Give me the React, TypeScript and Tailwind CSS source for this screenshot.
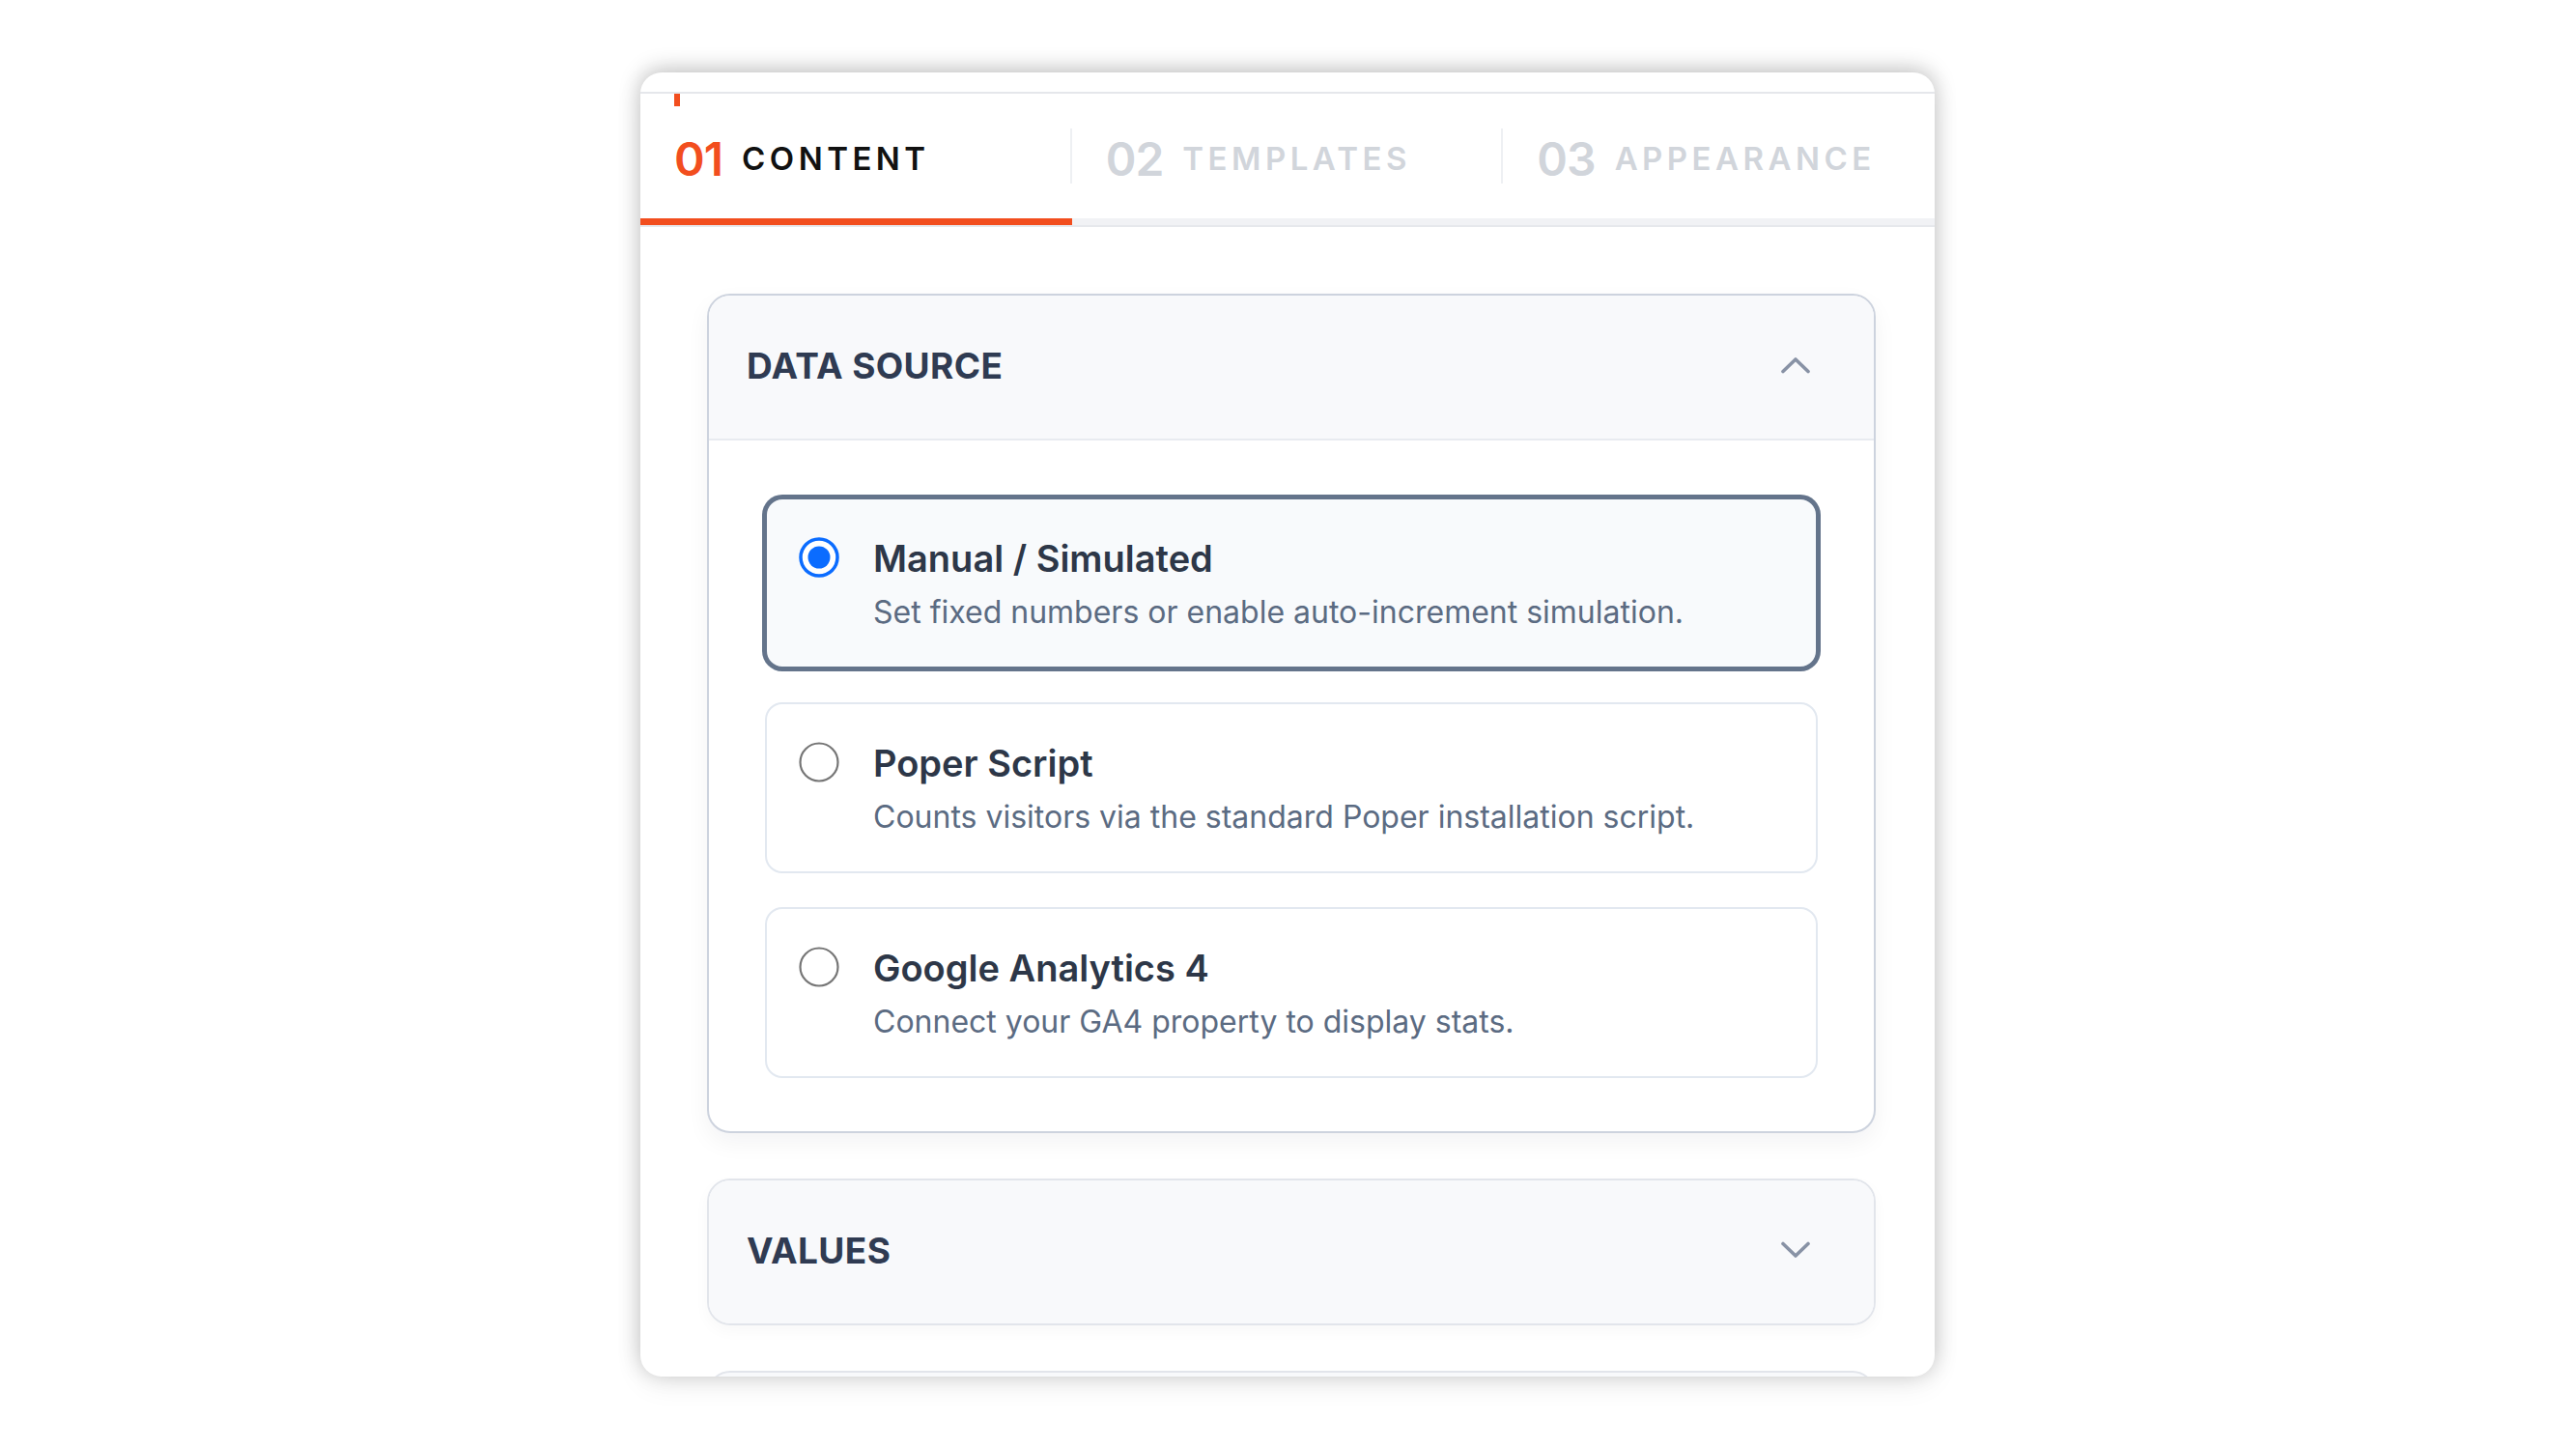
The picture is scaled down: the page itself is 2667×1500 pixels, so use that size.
import React from "react";

const font = { fontFamily: "Inter, 'Noto Sans', 'Liberation Sans', sans-serif" };

function Chevron({ up }: { up?: boolean }) {
  return (
    <svg width="30" height="18" viewBox="0 0 30 18" fill="none" className="shrink-0">
      <polyline
        points={up ? "2,15.5 15,3 28,15.5" : "2,2.5 15,15 28,2.5"}
        stroke="#8892a5"
        strokeWidth="3.6"
        strokeLinecap="round"
        strokeLinejoin="round"
      />
    </svg>
  );
}

function Radio({ checked }: { checked?: boolean }) {
  if (checked) {
    return (
      <svg width="42" height="42" viewBox="0 0 42 42" className="shrink-0">
        <circle cx="21" cy="21" r="19" fill="#ffffff" stroke="#0b6cff" strokeWidth="3.5" />
        <circle cx="21" cy="21" r="11.5" fill="#0b6cff" />
      </svg>
    );
  }
  return (
    <svg width="42" height="42" viewBox="0 0 42 42" className="shrink-0">
      <circle cx="21" cy="21" r="19.5" fill="#ffffff" stroke="#767676" strokeWidth="2.2" />
    </svg>
  );
}

function Option({ title, desc, checked }: { title: string; desc: string; checked?: boolean }) {
  return (
    <div
      className={
        checked
          ? "flex items-start gap-[35px] rounded-[18px] border-2 border-[#64748b] bg-[#f8fafc] px-[33px] pb-[35px] pt-[40px] shadow-[0_0_0_3px_#64748b]"
          : "flex items-start gap-[35px] rounded-[18px] border-2 border-[#e2e8f0] bg-white px-[33px] pb-[35px] pt-[40px]"
      }
    >
      <div className="-mt-[1px]">
        <Radio checked={checked} />
      </div>
      <div className="flex flex-col">
        <div className="-mt-[2px] text-[38px] font-semibold leading-[46px] text-[#2d3748]">{title}</div>
        <div className="mt-[12px] text-[32px] leading-[42px] text-[#5b6b82]">{desc}</div>
      </div>
    </div>
  );
}

function Tab({ num, label, active, last }: { num: string; label: string; active?: boolean; last?: boolean }) {
  return (
    <div className="relative flex flex-1 flex-col">
      {active && <div className="absolute left-[35px] top-0 h-[13px] w-[6px] bg-[#f24e1e]" />}
      <div className="flex h-[129px] items-center">
        <div className="flex flex-1 items-center gap-[20px] pl-[35px] pt-[6px]">
          <span
            className={
              "text-[48px] font-semibold leading-none tracking-[-0.02em] " +
              (active ? "text-[#f24e1e]" : "text-[#d1d5db]")
            }
          >
            {num}
          </span>
          <span
            className={
              "text-[33px] font-semibold leading-none tracking-[0.135em] " +
              (active ? "text-[#111111]" : "text-[#d1d5db]")
            }
          >
            {label}
          </span>
        </div>
        {!last && <div className="h-[57px] w-[2px] bg-[#eef0f3]" />}
      </div>
      <div className={active ? "h-[7px] bg-[#f24e1e]" : "h-[7px] bg-[#f1f2f5]"} />
    </div>
  );
}

function SectionHeader({ title, up }: { title?: string; up?: boolean }) {
  return (
    <div className="flex h-[148px] items-center justify-between bg-[#f8f9fb] pb-[4px] pl-[39px] pr-[66px]">
      <span className="text-[37px] font-bold leading-none tracking-[0.01em] text-[#2f3b52]">{title}</span>
      <Chevron up={up} />
    </div>
  );
}

export default function App() {
  return (
    <div className="min-h-[1500px] w-full bg-white" style={font}>
      <div className="pl-[663px] pt-[75px]">
        <div className="h-[1350px] w-[1340px] overflow-hidden rounded-[22px] bg-white shadow-[0_-4px_22px_rgba(0,0,0,0.22),0_8px_30px_rgba(0,0,0,0.07)]">
          <div className="h-[20px]" />
          <div className="border-t-2 border-[#e5e7eb]">
            <div className="flex border-b-2 border-[#e6e8ec]">
              <Tab num="01" label="CONTENT" active />
              <Tab num="02" label="TEMPLATES" />
              <Tab num="03" label="APPEARANCE" last />
            </div>
          </div>
          <div className="flex flex-col gap-[47px] pl-[69px] pr-[61px] pt-[69px]">
            <div className="overflow-hidden rounded-[24px] border-2 border-[#cdd3de] bg-white shadow-[0_10px_24px_rgba(15,23,42,0.05)]">
              <div className="border-b-2 border-[#e8ebf0]">
                <SectionHeader title="DATA SOURCE" up />
              </div>
              <div className="flex flex-col gap-[35px] px-[58px] pb-[55px] pt-[59px]">
                <Option
                  checked
                  title="Manual / Simulated"
                  desc="Set fixed numbers or enable auto-increment simulation."
                />
                <Option title="Poper Script" desc="Counts visitors via the standard Poper installation script." />
                <Option title="Google Analytics 4" desc="Connect your GA4 property to display stats." />
              </div>
            </div>
            <div className="overflow-hidden rounded-[24px] border-2 border-[#e2e5eb] shadow-[0_6px_16px_rgba(15,23,42,0.03)]">
              <SectionHeader title="VALUES" />
            </div>
            <div className="h-[148px] rounded-[24px] border-2 border-[#e2e5eb] bg-[#f8f9fb]" />
          </div>
        </div>
      </div>
    </div>
  );
}
